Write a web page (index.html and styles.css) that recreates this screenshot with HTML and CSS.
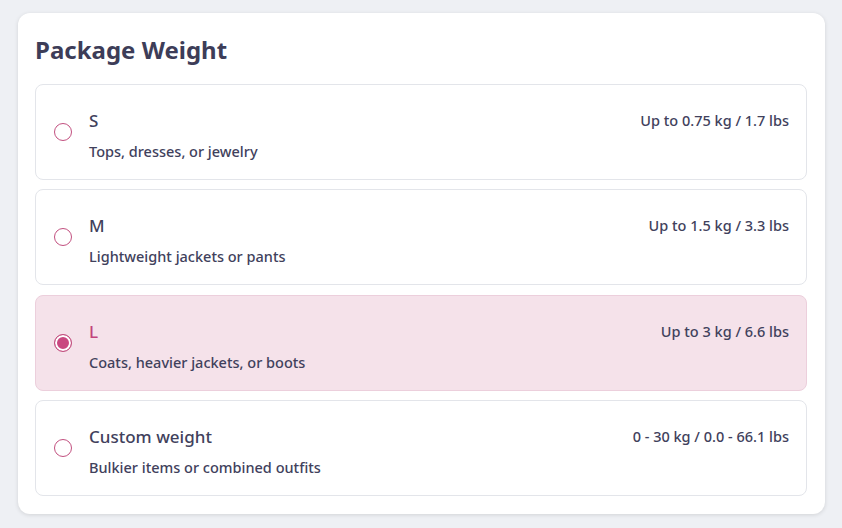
FILE: index.html
```html
<!DOCTYPE html>
<html lang="en">
<head>
    <meta charset="UTF-8">
    <title>Package Weight</title>
    <link rel="stylesheet" href="styles.css">
</head>
<body>
    <div class="card">
        <h2 class="card-title">Package Weight</h2>
        <div class="options">
            <label class="option">
                <span class="radio"></span>
                <span class="option-text">
                    <span class="option-name">S</span>
                    <span class="option-desc">Tops, dresses, or jewelry</span>
                </span>
                <span class="option-range">Up to 0.75 kg / 1.7 lbs</span>
            </label>
            <label class="option">
                <span class="radio"></span>
                <span class="option-text">
                    <span class="option-name">M</span>
                    <span class="option-desc">Lightweight jackets or pants</span>
                </span>
                <span class="option-range">Up to 1.5 kg / 3.3 lbs</span>
            </label>
            <label class="option selected">
                <span class="radio"></span>
                <span class="option-text">
                    <span class="option-name">L</span>
                    <span class="option-desc">Coats, heavier jackets, or boots</span>
                </span>
                <span class="option-range">Up to 3 kg / 6.6 lbs</span>
            </label>
            <label class="option">
                <span class="radio"></span>
                <span class="option-text">
                    <span class="option-name">Custom weight</span>
                    <span class="option-desc">Bulkier items or combined outfits</span>
                </span>
                <span class="option-range">0 - 30 kg / 0.0 - 66.1 lbs</span>
            </label>
        </div>
    </div>
</body>
</html>
```

FILE: styles.css
```css
* {
    margin: 0;
    padding: 0;
    box-sizing: border-box;
}

body {
    font-family: 'Noto Sans', 'Open Sans', sans-serif;
    background: #eef0f4;
    color: #41415c;
    padding: 13px 17px 13px 18px;
}

.card {
    background: white;
    border-radius: 12px;
    box-shadow: 0 1px 4px rgba(0,0,0,0.12);
    padding: 20px 18px 18px 17px;
}

.card-title {
    font-size: 24px;
    font-weight: 700;
    line-height: 34px;
    margin-bottom: 17px;
    color: #3d3d58;
}

.options {
    display: flex;
    flex-direction: column;
    gap: 9.4px;
}

.option {
    display: flex;
    align-items: center;
    height: 96px;
    padding: 0 17px 0 18px;
    border: 1px solid #e3e5ea;
    border-radius: 8px;
    background: white;
}

.option.selected {
    background: #f5e2ea;
    border-color: #eccfdc;
}

.radio {
    width: 18px;
    height: 18px;
    border: 1.5px solid #c2507f;
    border-radius: 50%;
    margin-right: 17px;
    flex-shrink: 0;
    background: white;
}

.option.selected .radio {
    background: #c94880;
    box-shadow: inset 0 0 0 2px white;
}

.option-text {
    flex: 1;
    display: flex;
    flex-direction: column;
    gap: 8px;
    align-self: stretch;
    padding-top: 24px;
}

.option-name {
    font-size: 17px;
    font-weight: 500;
    line-height: 24px;
}

.option.selected .option-name {
    color: #c2447c;
}

.option-desc {
    font-size: 14.5px;
    line-height: 20px;
    font-weight: 500;
}

.option-range {
    align-self: flex-start;
    padding-top: 25px;
    font-size: 14.5px;
    font-weight: 500;
    line-height: 20px;
}
```
